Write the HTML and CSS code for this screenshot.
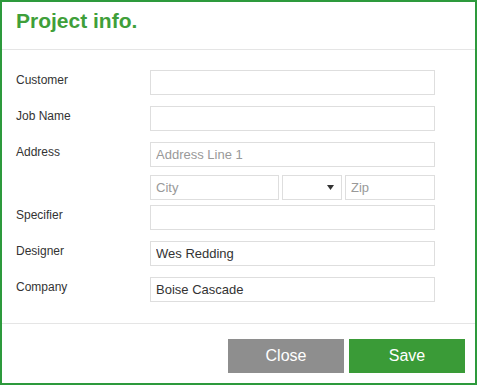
FILE: index.html
```html
<!DOCTYPE html>
<html lang="en">
<head>
    <meta charset="UTF-8">
    <title>Project info.</title>
    <link rel="stylesheet" href="styles.css">
</head>
<body>
<div class="modal">
    <div class="modal-header">
        <h1 class="title">Project info.</h1>
    </div>
    <div class="modal-body">
        <div class="row">
            <label class="label">Customer</label>
            <div class="field"><input class="input" type="text"></div>
        </div>
        <div class="row">
            <label class="label">Job Name</label>
            <div class="field"><input class="input" type="text"></div>
        </div>
        <div class="row row-address">
            <label class="label">Address</label>
            <div class="field stack">
                <input class="input" type="text" placeholder="Address Line 1">
                <div class="city-row">
                    <input class="input city" type="text" placeholder="City">
                    <div class="select">
                        <svg width="7" height="5" viewBox="0 0 7 5"><path d="M0 0H7L3.5 5Z" fill="#333"/></svg>
                    </div>
                    <input class="input zip" type="text" placeholder="Zip">
                </div>
            </div>
        </div>
        <div class="row">
            <label class="label">Specifier</label>
            <div class="field"><input class="input" type="text"></div>
        </div>
        <div class="row">
            <label class="label">Designer</label>
            <div class="field"><input class="input" type="text" value="Wes Redding"></div>
        </div>
        <div class="row">
            <label class="label">Company</label>
            <div class="field"><input class="input" type="text" value="Boise Cascade"></div>
        </div>
    </div>
    <div class="modal-footer">
        <button class="btn btn-close">Close</button>
        <button class="btn btn-save">Save</button>
    </div>
</div>
</body>
</html>
```
FILE: styles.css
```css
*{
    margin: 0;
    padding: 0;
    box-sizing: border-box;
}
body{
    background: #fff;
    font-family: "Liberation Sans", Arial, sans-serif;
    color: #333;
}
.modal{
    width: 477px;
    border: 2px solid #2d9a3c;
    background: #fff;
}
.modal-header{
    padding: 7px 14px 16px;
    border-bottom: 1px solid #e5e5e5;
}
.title{
    font-size: 21px;
    line-height: 24px;
    font-weight: bold;
    color: #3f9f3a;
}
.modal-body{
    padding: 20px 0 10px 14px;
}
.row{
    display: flex;
    margin-bottom: 11px;
}
.row-address{
    margin-bottom: 5px;
}
.label{
    width: 134px;
    font-size: 12px;
    line-height: 20px;
    color: #333;
}
.field{
    width: 285px;
}
.stack{
    display: flex;
    flex-direction: column;
    gap: 8px;
}
.input{
    display: block;
    width: 100%;
    height: 25px;
    border: 1px solid #dedede;
    padding: 0 5px;
    font-family: "Liberation Sans", Arial, sans-serif;
    font-size: 13px;
    color: #333;
    outline: none;
}
.input::placeholder{
    color: #999;
}
.city-row{
    display: flex;
    gap: 3px;
}
.city{
    width: 129px;
}
.select{
    width: 60px;
    height: 25px;
    border: 1px solid #dedede;
    display: flex;
    justify-content: flex-end;
    align-items: center;
    padding-right: 7px;
}
.zip{
    width: 90px;
}
.modal-footer{
    border-top: 1px solid #e5e5e5;
    padding: 15px 10px 10px;
    display: flex;
    justify-content: flex-end;
    gap: 5px;
}
.btn{
    width: 116px;
    height: 34px;
    border: 0;
    color: #fff;
    font-family: "Liberation Sans", Arial, sans-serif;
    font-size: 16px;
    cursor: pointer;
}
.btn-close{
    background: #8e8e8e;
}
.btn-save{
    background: #3a9b37;
}
```
